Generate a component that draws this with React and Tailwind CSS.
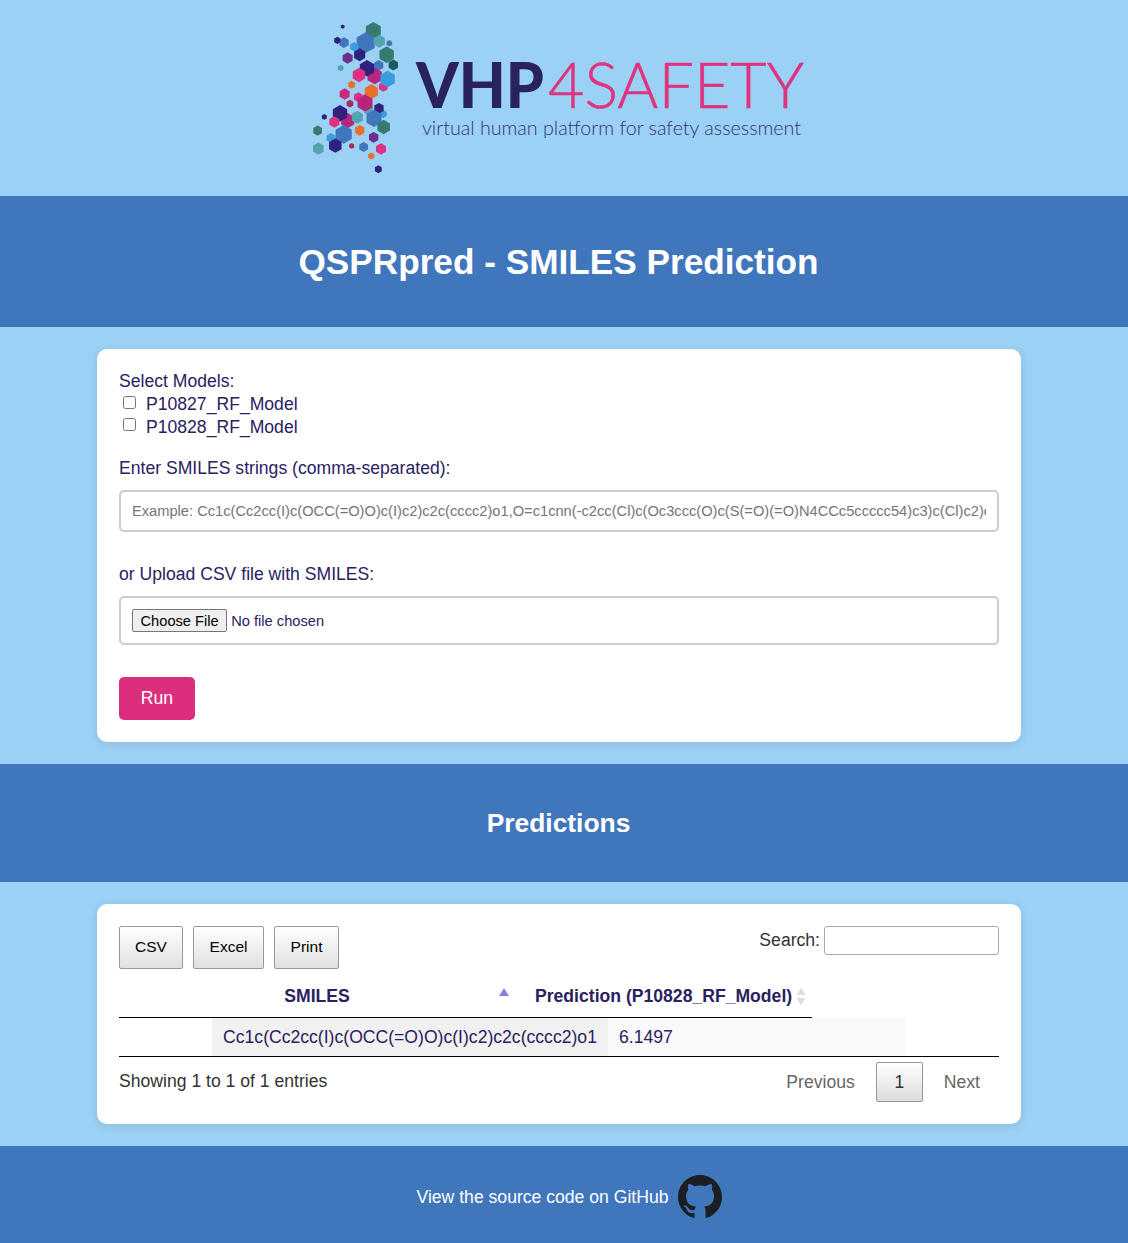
const navy = "#31217f";
const blue = "#4076bc";
const teal = "#35796f";
const aqua = "#55a3ae";
const sky = "#3a9be0";
const pink = "#e03083";
const rose = "#b5267c";
const wine = "#a82a5c";
const orange = "#e8702a";
const purple = "#6a2f8f";

// hexagons of the logo mark: x, y, radius, colour
const hexes = [
  [128, 50, 6, navy],
  [220, 62, 24, teal],
  [268, 100, 9, blue],
  [197, 98, 29, blue],
  [238, 94, 18, aqua],
  [132, 98, 15, blue],
  [112, 91, 10, navy],
  [163, 110, 13, sky],
  [179, 134, 18, navy],
  [143, 144, 16, purple],
  [122, 174, 9, aqua],
  [260, 134, 23, teal],
  [280, 165, 15, "#175b63"],
  [236, 166, 15, blue],
  [250, 230, 14, pink],
  [224, 198, 23, rose],
  [201, 175, 23, navy],
  [177, 195, 20, pink],
  [263, 207, 23, sky],
  [155, 224, 11, orange],
  [214, 245, 21, orange],
  [134, 252, 16, "#c92a7c"],
  [205, 300, 14, aqua],
  [175, 262, 14, pink],
  [150, 281, 11, wine],
  [195, 279, 24, rose],
  [250, 312, 11, sky],
  [237, 295, 15, navy],
  [73, 321, 8, navy],
  [143, 332, 21, rose],
  [120, 310, 23, navy],
  [103, 336, 16, pink],
  [172, 322, 18, aqua],
  [222, 325, 24, blue],
  [179, 361, 15, orange],
  [251, 351, 20, teal],
  [53, 362, 14, teal],
  [93, 384, 14, sky],
  [131, 373, 26, blue],
  [221, 382, 15, purple],
  [106, 407, 20, navy],
  [55, 416, 17, aqua],
  [155, 408, 8, wine],
  [191, 411, 14, blue],
  [243, 417, 16, pink],
  [214, 438, 10, orange],
  [235, 478, 11, navy],
];

function hexPoints(x, y, rad) {
  const r = rad * 1.08;
  const pts = [];
  for (let i = 0; i < 6; i++) {
    const a = (Math.PI / 3) * i + Math.PI / 6;
    pts.push(`${(x + r * Math.cos(a)).toFixed(1)},${(y + r * Math.sin(a)).toFixed(1)}`);
  }
  return pts.join(" ");
}

function Logo() {
  return (
    <svg width="528" height="175" viewBox="300 10 528 175" className="block">
      <g transform="translate(300 10) scale(0.3333)">
        {hexes.map(([x, y, r, c], i) => (
          <polygon key={i} points={hexPoints(x, y, r)} fill={c} />
        ))}
      </g>
      <text x="416" y="108" textLength="128" lengthAdjust="spacingAndGlyphs" fontSize="63" fontWeight="900" fill="#2a215f" className="font-['Lato',sans-serif]">VHP</text>
      <text x="548" y="108" textLength="256" lengthAdjust="spacingAndGlyphs" fontSize="63" fontWeight="300" fill="#e0337f" stroke="#e0337f" strokeWidth="0.5" className="font-['Lato',sans-serif]">4SAFETY</text>
      <text x="422" y="135" textLength="379" lengthAdjust="spacingAndGlyphs" fontSize="20" fontWeight="300" fill="#35326f" className="font-['Lato',sans-serif]">virtual human platform for safety assessment</text>
    </svg>
  );
}

function GithubMark() {
  return (
    <svg width="44" height="44" viewBox="0 0 16 16" fill="#1b1f23">
      <path d="M8 0C3.58 0 0 3.58 0 8c0 3.54 2.29 6.53 5.47 7.59.4.07.55-.17.55-.38 0-.19-.01-.82-.01-1.49-2.01.37-2.53-.49-2.69-.94-.09-.23-.48-.94-.82-1.13-.28-.15-.68-.52-.01-.53.63-.01 1.08.58 1.23.82.72 1.21 1.87.87 2.33.66.07-.52.28-.87.51-1.07-1.78-.2-3.64-.89-3.64-3.95 0-.87.31-1.59.82-2.15-.08-.2-.36-1.02.08-2.12 0 0 .67-.21 2.2.82.64-.18 1.32-.27 2-.27.68 0 1.36.09 2 .27 1.53-1.04 2.2-.82 2.2-.82.44 1.1.16 1.92.08 2.12.51.56.82 1.27.82 2.15 0 3.07-1.87 3.75-3.65 3.95.29.25.54.73.54 1.48 0 1.07-.01 1.93-.01 2.2 0 .21.15.46.55.38A8.013 8.013 0 0016 8c0-4.42-3.58-8-8-8z" />
    </svg>
  );
}

function DtButton({ children, className }) {
  return (
    <button className={"h-[43px] rounded-[2px] border border-[#999] bg-gradient-to-b from-white to-[#e0e0e0] text-[15.5px] text-black " + className}>
      {children}
    </button>
  );
}

export default function App() {
  return (
    <div className="min-h-[1243px] bg-[#9bd1f5] font-['Liberation_Sans',Arial,sans-serif] text-[17.6px] leading-[22.5px] text-[#2a215f]">
      <div className="flex justify-center pt-[10px] pb-[11px]">
        <Logo />
      </div>

      <div className="flex h-[131px] items-center justify-center bg-[#3f76bc] pt-[1px] pr-[11px]">
        <h1 className="text-[35.2px] font-bold text-white">QSPRpred - SMILES Prediction</h1>
      </div>

      {/* Form card */}
      <div className="mt-[22px] mr-[107px] ml-[97px] rounded-[10px] bg-white p-[22px] shadow-[0_2px_10px_rgba(0,0,0,0.1)]">
        <div className="h-[22.5px] leading-[21px]">Select Models:</div>
        <label className="flex h-[22.5px] items-center leading-[21px]">
          <input type="checkbox" className="mr-[5px] mb-[4px] ml-[4px] h-[13px] w-[13px] appearance-auto" />
          <span className="ml-[5px]">P10827_RF_Model</span>
        </label>
        <label className="flex h-[22.5px] items-center">
          <input type="checkbox" className="mr-[5px] mb-[5px] ml-[4px] h-[13px] w-[13px] appearance-auto" />
          <span className="ml-[5px]">P10828_RF_Model</span>
        </label>

        <div className="mt-[19px] h-[22.5px] leading-[21px]">Enter SMILES strings (comma-separated):</div>
        <input
          type="text"
          placeholder="Example: Cc1c(Cc2cc(I)c(OCC(=O)O)c(I)c2)c2c(cccc2)o1,O=c1cnn(-c2cc(Cl)c(Oc3ccc(O)c(S(=O)(=O)N4CCc5ccccc54)c3)c(Cl)c2)c(=O)[nH]1"
          className="mt-[10px] block h-[42px] w-full rounded-[5px] border-2 border-[#ccc] px-[11px] text-[14.67px] placeholder:text-[#757575]"
        />

        <div className="mt-[32px] h-[22px] leading-[20px]">or Upload CSV file with SMILES:</div>
        <div className="mt-[10px] flex h-[49px] items-center rounded-[5px] border-2 border-[#ccc] px-[11px]">
          <input type="file" className="text-[14.67px] file:mr-[4px] file:h-[23px] file:rounded-[2px] file:border file:border-[#767676] file:bg-[#efefef] file:px-[7.5px] file:py-0 file:text-[14.67px] file:text-black" />
        </div>

        <button className="mt-[32px] block h-[43px] w-[76px] rounded-[5px] bg-[#dd2e7d] text-white">Run</button>
      </div>

      <div className="mt-[22px] flex h-[118px] items-center justify-center bg-[#3f76bc] pt-[1px] pr-[11px]">
        <h2 className="text-[26.4px] font-bold text-white">Predictions</h2>
      </div>

      {/* Results card */}
      <div className="mt-[22px] mr-[107px] ml-[97px] rounded-[10px] bg-white p-[22px] shadow-[0_2px_10px_rgba(0,0,0,0.1)]">
        <div className="flex justify-between">
          <div className="flex gap-[10px]">
            <DtButton className="w-[64px]">CSV</DtButton>
            <DtButton className="w-[71px]">Excel</DtButton>
            <DtButton className="w-[65px]">Print</DtButton>
          </div>
          <div className="flex h-[29px] items-center text-[#333]">
            <span>Search:</span>
            <input type="text" className="ml-[4px] h-[29px] w-[175px] rounded-[3px] border border-[#aaa]" />
          </div>
        </div>

        <div className="flex h-[49px] w-[693px] border-b border-black pt-[6px] font-bold">
          <div className="relative flex w-[396px] items-center justify-center">
            SMILES
            <svg width="10" height="8" viewBox="0 0 10 8" className="absolute top-[13px] right-[6px]">
              <path d="M5 0 10 8H0z" fill="#8585dc" />
            </svg>
          </div>
          <div className="relative flex flex-1 items-center pl-[20px]">
            Prediction (P10828_RF_Model)
            <svg width="10" height="17" viewBox="0 0 10 17" className="absolute top-[13px] right-[6px]">
              <path d="M5 0 9.5 7H.5zM5 17 .5 10h9z" fill="#dcdcdc" />
            </svg>
          </div>
        </div>

        <div className="flex h-[39px] border-b border-black pl-[93px]">
          <div className="flex w-[396px] items-center justify-center bg-[#f1f1f1]">
            Cc1c(Cc2cc(I)c(OCC(=O)O)c(I)c2)c2c(cccc2)o1
          </div>
          <div className="flex w-[297px] items-center bg-[#f9f9f9] pl-[11px]">6.1497</div>
        </div>

        <div className="mt-[5px] flex h-[40px] items-start justify-between">
          <div className="pt-[8px] text-[#333]">Showing 1 to 1 of 1 entries</div>
          <div className="flex items-center">
            <span className="text-[#666]">Previous</span>
            <span className="mx-[21px] flex h-[40px] w-[47px] items-center justify-center rounded-[2px] border border-[#979797] bg-gradient-to-b from-white to-[#dcdcdc] text-[#333]">1</span>
            <span className="mr-[19px] text-[#666]">Next</span>
          </div>
        </div>
      </div>

      <div className="mt-[22px] flex h-[97px] items-center justify-center gap-[9px] bg-[#3f76bc] pt-[5px] pl-[10px] text-white">
        <span>View the source code on GitHub</span>
        <GithubMark />
      </div>
    </div>
  );
}
